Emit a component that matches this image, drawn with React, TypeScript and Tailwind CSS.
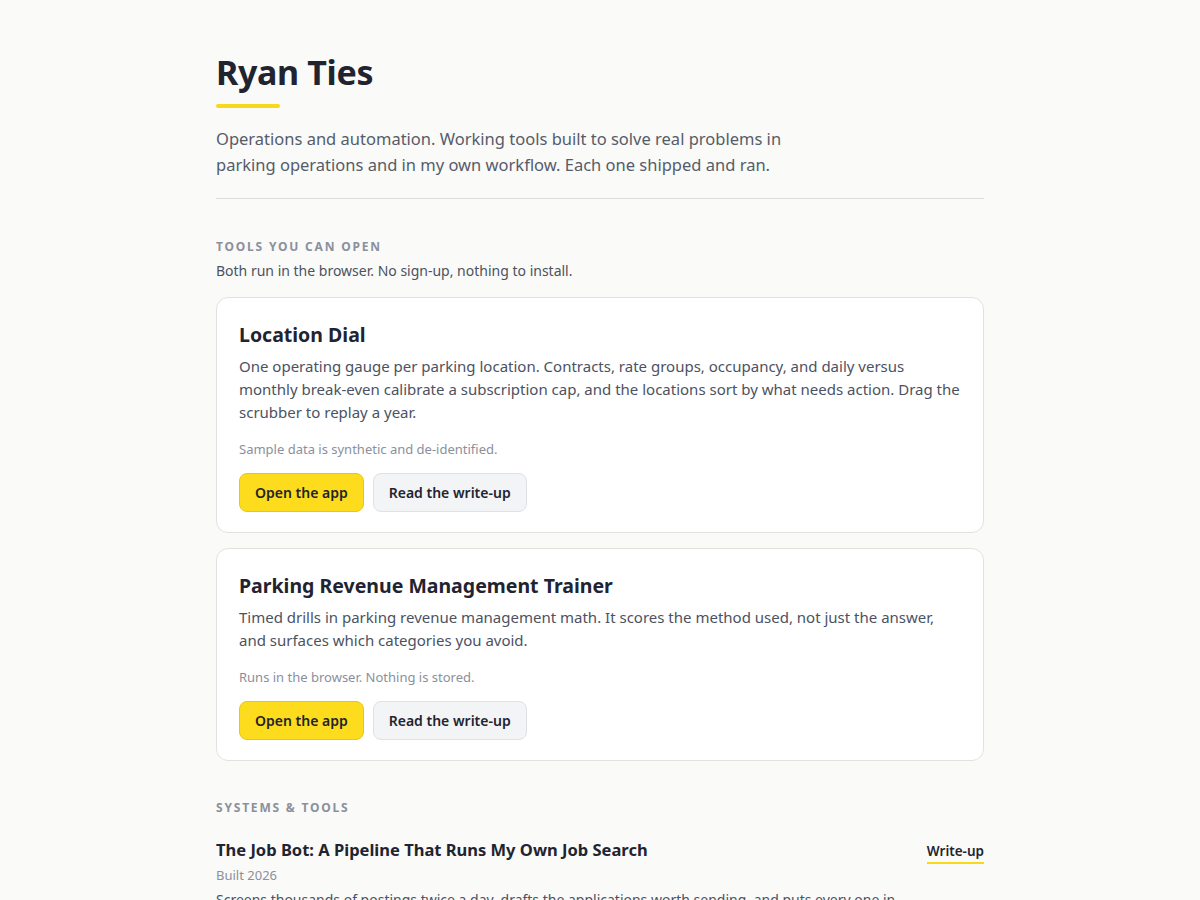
import React from "react";

const font = { fontFamily: '"Noto Sans", "Open Sans", sans-serif' };

function Card({ title, desc, note }: { title: string; desc: string; note: string }) {
  return (
    <div className="rounded-xl border border-[#e2e2e0] bg-white px-[22px] pt-[22px] pb-[20px]">
      <h3 className="text-[19.5px] leading-[30px] font-bold text-[#1f2430]">{title}</h3>
      <p className="mt-[5px] text-[15px] leading-[23px] text-[#4b5262]">{desc}</p>
      <p className="mt-[15px] text-[13px] leading-[20px] text-[#8a909c]">{note}</p>
      <div className="mt-[14px] flex gap-[9px]">
        <button className="h-[39px] rounded-lg border border-[#ecc60e] bg-[#fcdc1c] px-[15px] text-[14px] font-semibold text-[#1f2430]">
          Open the app
        </button>
        <button className="h-[39px] rounded-lg border border-[#dfe1e6] bg-[#f3f4f6] px-[15px] text-[14px] font-semibold text-[#1f2430]">
          Read the write-up
        </button>
      </div>
    </div>
  );
}

export default function App() {
  return (
    <div style={font} className="min-h-[900px] bg-[#fafaf8]">
      <div className="mx-auto w-[768px] pt-[48px] pb-[40px]">
        <h1 className="text-[34px] leading-[48px] font-bold tracking-[-0.01em] text-[#1f2430]">Ryan Ties</h1>
        <div className="mt-[8px] h-[4px] w-[64px] rounded-full bg-[#f8d81a]" />
        <p className="mt-[18px] max-w-[576px] text-[16.5px] leading-[26px] text-[#555c6a]">
          Operations and automation. Working tools built to solve real problems in parking operations and in my own workflow. Each one shipped and ran.
        </p>
        <div className="mt-[20px] h-px bg-[#dcdcdc]" />

        <h2 className="mt-[40px] text-[12px] leading-[16px] font-bold uppercase tracking-[0.15em] text-[#8a909c]">Tools you can open</h2>
        <p className="mt-[6px] text-[14px] leading-[20px] text-[#4b5262]">Both run in the browser. No sign-up, nothing to install.</p>

        <div className="mt-[16px] flex flex-col gap-[15px]">
          <Card
            title="Location Dial"
            desc="One operating gauge per parking location. Contracts, rate groups, occupancy, and daily versus monthly break-even calibrate a subscription cap, and the locations sort by what needs action. Drag the scrubber to replay a year."
            note="Sample data is synthetic and de-identified."
          />
          <Card
            title="Parking Revenue Management Trainer"
            desc="Timed drills in parking revenue management math. It scores the method used, not just the answer, and surfaces which categories you avoid."
            note="Runs in the browser. Nothing is stored."
          />
        </div>

        <h2 className="mt-[39px] text-[12px] leading-[16px] font-bold uppercase tracking-[0.15em] text-[#8a909c]">Systems &amp; tools</h2>

        <div className="mt-[21px]">
          <div className="flex items-start justify-between">
            <h3 className="text-[16.5px] leading-[26px] font-bold text-[#1f2430]">The Job Bot: A Pipeline That Runs My Own Job Search</h3>
            <a className="mt-[4px] border-b-2 border-[#f8d81a] pb-[1px] text-[13.5px] leading-[20px] font-semibold text-[#1f2430]">Write-up</a>
          </div>
          <p className="mt-[1px] text-[13px] leading-[20px] text-[#8a909c]">Built 2026</p>
          <p className="mt-[4px] max-w-[700px] text-[14px] leading-[22px] text-[#4b5262]">
            Screens thousands of postings twice a day, drafts the applications worth sending, and puts every one in front of me for review before anything goes out.
          </p>
        </div>
      </div>
    </div>
  );
}
